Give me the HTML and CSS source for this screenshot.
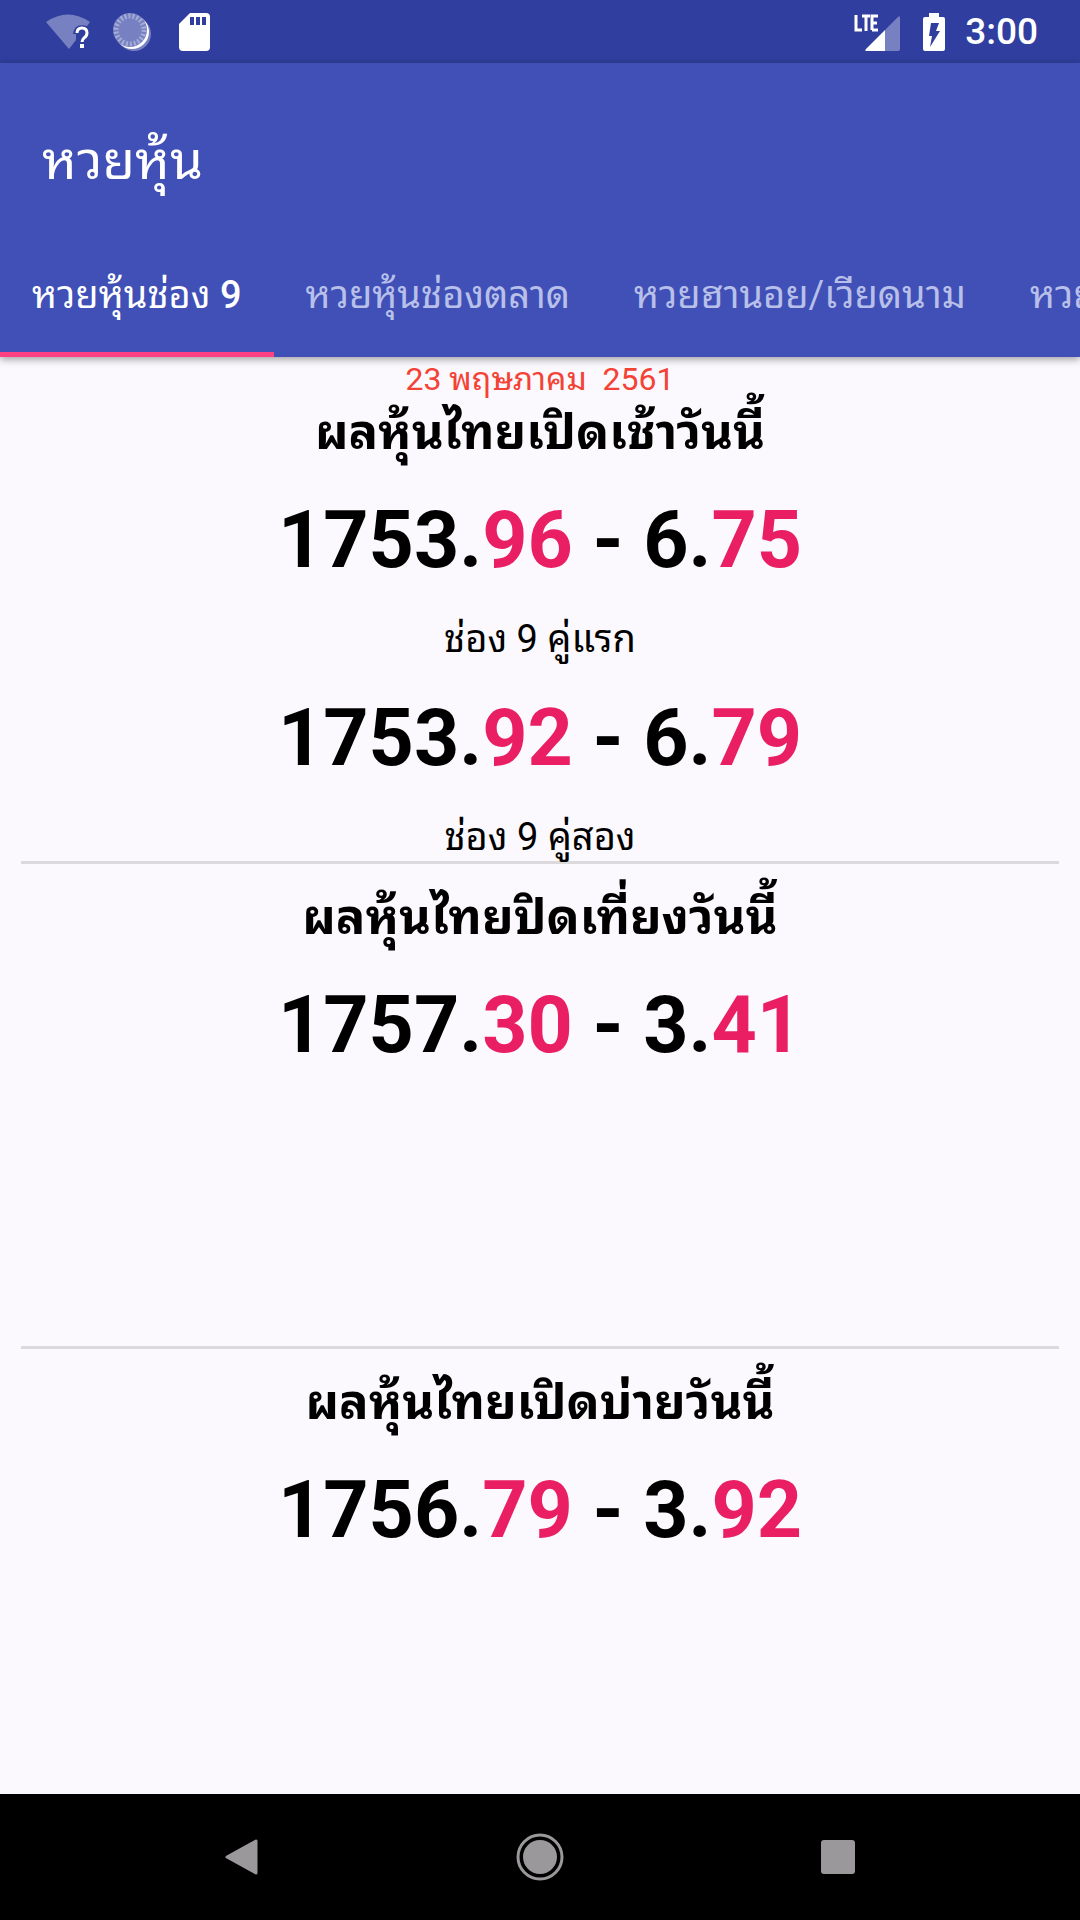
FILE: index.html
```html
<!DOCTYPE html>
<html lang="th">
<head>
<meta charset="utf-8">
<meta name="viewport" content="width=device-width, initial-scale=1">
<title>หวยหุ้น</title>
<link rel="stylesheet" href="styles.css">
</head>
<body>
<div class="status">
  <svg class="icon-wifi" width="46" height="38" viewBox="0 0 46 38" aria-hidden="true"><path d="M0 9Q22-6 44 9L41 13Q28 10 27 21H30L30 27L23 36Z" fill="#7780c0"/><path d="M31 20Q31 15 36 15Q41 15 41 20Q41 23 38 25Q36 27 36 29" fill="none" stroke="#fff" stroke-width="3"/><rect x="34" y="31" width="4" height="4" fill="#fff"/></svg>
  <svg class="icon-sync" width="38" height="38" viewBox="0 0 38 38" aria-hidden="true"><circle cx="21" cy="21" r="17" fill="#7780c0"/><circle cx="19" cy="19" r="17" fill="#fff"/><circle cx="17" cy="17" r="17" fill="#7780c0"/><circle cx="17" cy="17" r="14" fill="none" stroke="#a4acd8" stroke-width="5" stroke-dasharray="2 2"/></svg>
  <svg class="icon-card" width="31" height="38" viewBox="0 0 31 38" aria-hidden="true"><path d="M11 0H27Q31 0 31 4V34Q31 38 27 38H4Q0 38 0 34V11Z" fill="#fff"/><path d="M13 4V12M19 4V12M25 4V12" stroke="#303f9f" stroke-width="4"/></svg>
  <span class="spacer"></span>
  <svg class="icon-lte" width="48" height="38" viewBox="0 0 48 38" aria-hidden="true"><path d="M44 4Q46 2 46 5V36Q46 38 44 38H31V17Z" fill="#7780c0"/><path d="M31 17V38H13Q10 38 12 36Z" fill="#fff"/><path d="M2 2V17H8M8 3H16M12 3V18M18 17V3H24M18 10H23M18 17H24" fill="none" stroke="#fff" stroke-width="3"/></svg>
  <svg class="icon-battery" width="22" height="38" viewBox="0 0 22 38" aria-hidden="true"><path d="M6 0H16V4H20Q22 4 22 6V36Q22 38 20 38H2Q0 38 0 36V6Q0 4 2 4H6Z" fill="#fff"/><path d="M8 10H16L13 18H17L7 34L9 23H6Z" fill="#303f9f"/></svg>
  <span class="clock">3:00</span>
</div>
<header class="appbar">
  <h1 class="title">หวยหุ้น</h1>
  <nav class="tabs">
    <a class="tab active" href="#ch9">หวยหุ้นช่อง <span class="digit">9</span></a>
    <a class="tab" href="#market">หวยหุ้นช่องตลาด</a>
    <a class="tab" href="#hanoi">หวยฮานอย/เวียดนาม</a>
    <a class="tab" href="#more">หวย</a>
  </nav>
</header>
<main class="results" id="ch9">
  <section class="round">
    <p class="date">23 พฤษภาคม&nbsp; 2561</p>
    <h2 class="heading">ผลหุ้นไทยเปิดเช้าวันนี้</h2>
    <p class="figure">1753.<b>96</b> - 6.<b>75</b></p>
    <p class="note">ช่อง 9 คู่แรก</p>
    <p class="figure">1753.<b>92</b> - 6.<b>79</b></p>
    <p class="note">ช่อง 9 คู่สอง</p>
  </section>
  <section class="round later">
    <h2 class="heading">ผลหุ้นไทยปิดเที่ยงวันนี้</h2>
    <p class="figure">1757.<b>30</b> - 3.<b>41</b></p>
  </section>
  <section class="round later">
    <h2 class="heading">ผลหุ้นไทยเปิดบ่ายวันนี้</h2>
    <p class="figure">1756.<b>79</b> - 3.<b>92</b></p>
  </section>
</main>
<footer class="navbar">
  <button class="nav" aria-label="Back"><svg width="48" height="48" viewBox="0 0 48 48"><path d="M9 24L38 8V40Z" fill="#9a989a" stroke="#9a989a" stroke-width="3" stroke-linejoin="round"/></svg></button>
  <button class="nav" aria-label="Home"><svg width="48" height="48" viewBox="0 0 48 48"><circle cx="24" cy="24" r="22" fill="none" stroke="#9a989a" stroke-width="3"/><circle cx="24" cy="24" r="17" fill="#9a989a"/></svg></button>
  <button class="nav" aria-label="Recent apps"><svg width="48" height="48" viewBox="0 0 48 48"><rect x="7" y="7" width="34" height="34" rx="3" fill="#9a989a"/></svg></button>
</footer>
</body>
</html>
```
FILE: styles.css
```css
* { box-sizing: border-box; margin: 0; padding: 0; }
body { min-height: 100vh; display: flex; flex-direction: column; background: #fbf9fd; color: #000; font-family: Roboto, "Noto Sans Thai Looped", "Droid Sans Thai", "Loma", "Waree", "Umpush", "Garuda", "Noto Sans", sans-serif; overflow-x: hidden; }
.status { height: 63px; display: flex; align-items: center; padding: 0 42px 0 46px; background: #303f9f; color: #fff; }
.icon-wifi { margin-right: 21px; }
.icon-sync { margin-right: 28px; }
.spacer { flex: 1; }
.icon-lte { margin-right: 21px; }
.icon-battery { margin-right: 20px; }
.clock { font-size: 37px; font-weight: 500; line-height: 64px; }
.appbar { position: relative; background: #4050b6; color: #fff; box-shadow: 0 2px 8px rgba(0,0,0,.4); }
.title { height: 168px; padding: 0 42px; font-size: 53px; font-weight: 400; line-height: 196px; }
.tabs { display: flex; height: 126px; overflow: hidden; }
.tab { flex: none; padding: 0 32px; line-height: 128px; font-size: 38px; color: #b8c0ea; text-decoration: none; white-space: nowrap; }
.active { color: #fff; border-bottom: 5px solid #ff4081; }
.digit { font-weight: 500; }
.results { flex: 1; padding: 0 21px; text-align: center; }
.round { border-bottom: 3px solid #dbd9dc; }
.later { height: 485px; padding-top: 22px; }
.round:last-child { border: 0; height: auto; }
.date { font-size: 32px; line-height: 44px; color: #f44336; }
.heading { font-size: 49px; line-height: 64px; font-weight: 700; }
.figure { font-size: 79px; line-height: 150px; font-weight: 700; }
.figure b { font-weight: 700; color: #e91e63; }
.note { font-size: 38px; line-height: 48px; }
.navbar { height: 126px; display: grid; grid-template-columns: repeat(3, 1fr); align-items: center; justify-items: center; padding: 0 93px; background: #000; }
.nav { border: 0; background: none; display: flex; }
```
